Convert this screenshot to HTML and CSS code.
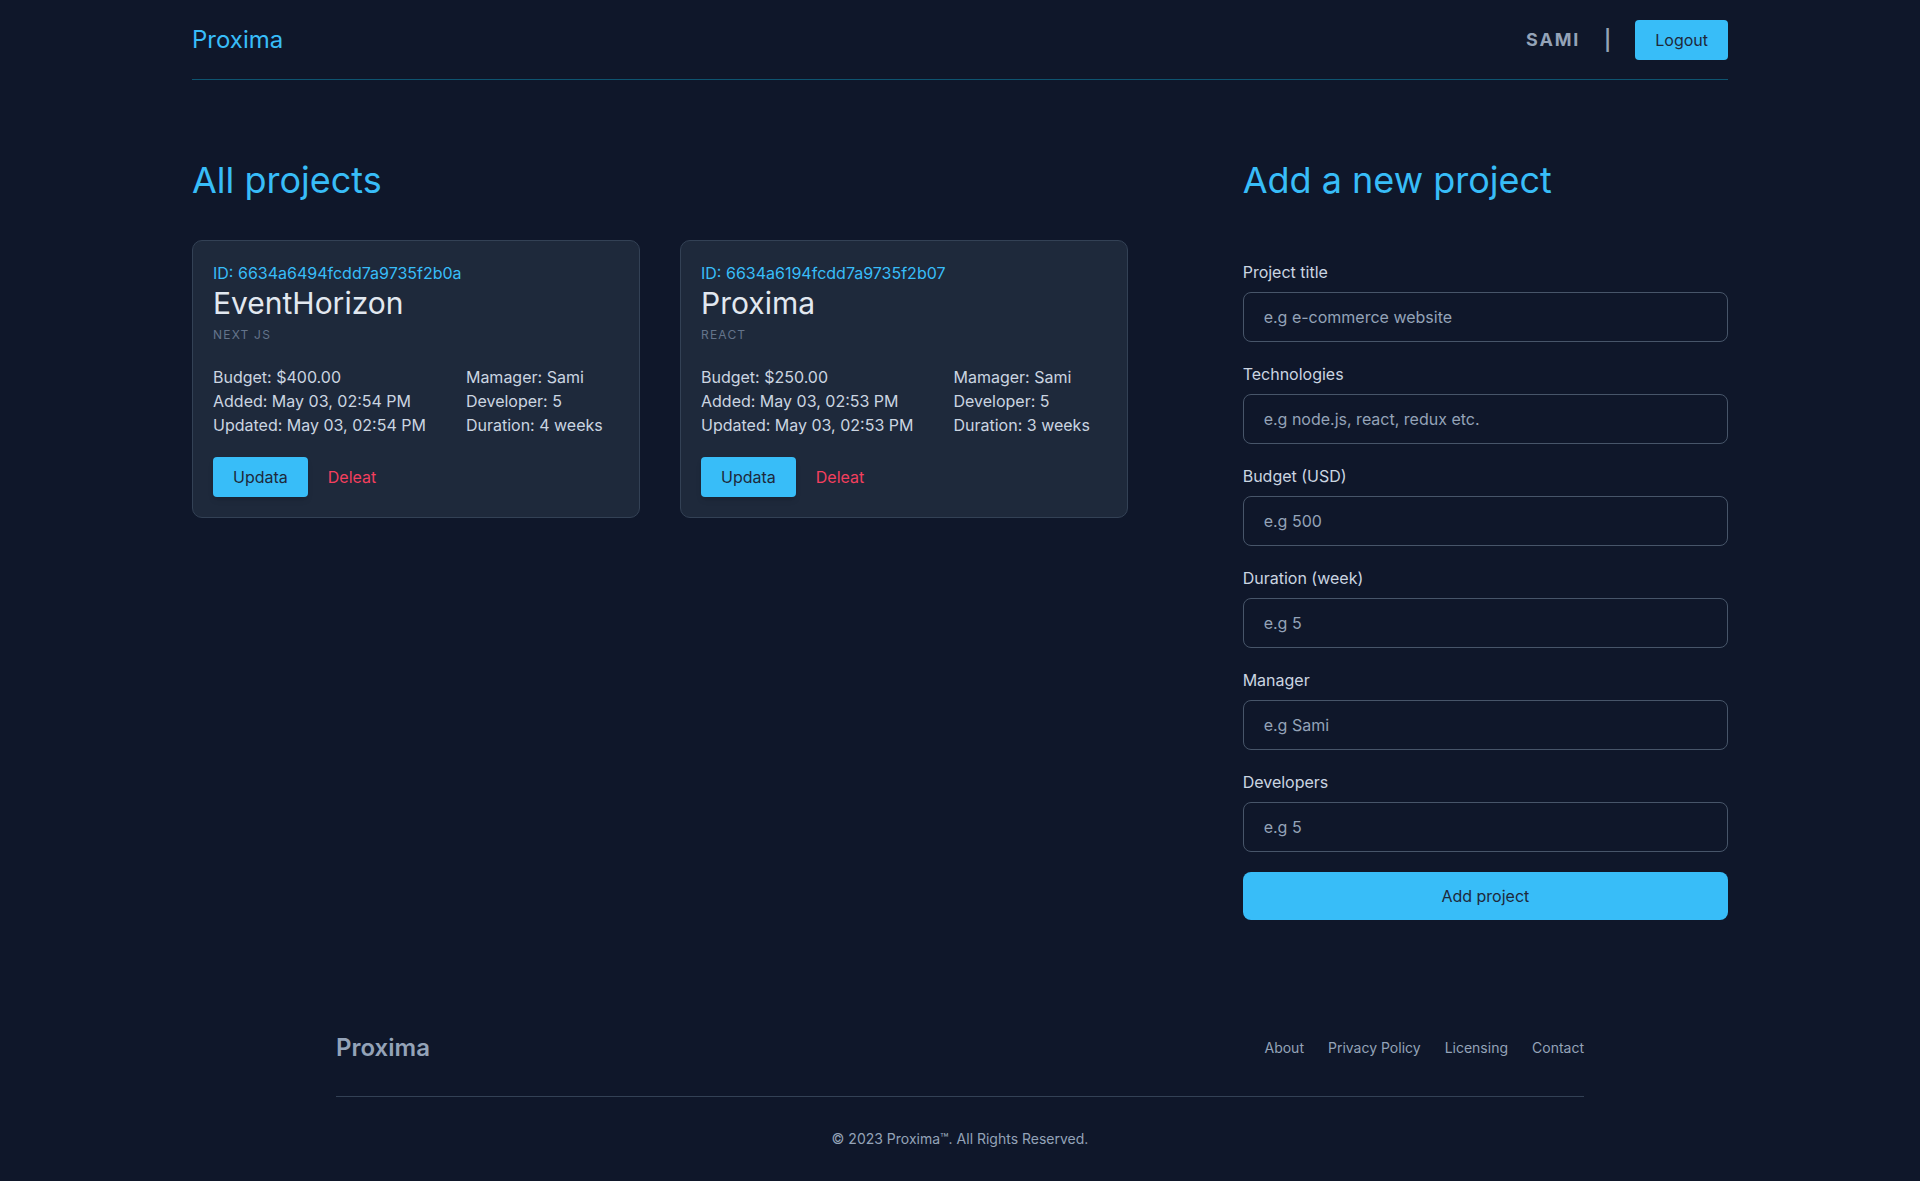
FILE: index.html
```html
<!DOCTYPE html>
<html lang="en">
<head>
<meta charset="utf-8">
<title>Proxima</title>
<link rel="stylesheet" href="styles.css">
</head>
<body>
<div class="container">
  <header class="header">
    <a class="logo" href="#">Proxima</a>
    <div class="user">
      <span class="user-name">SAMI</span>
      <span class="sep">|</span>
      <button class="btn btn-primary">Logout</button>
    </div>
  </header>

  <main class="main">
    <section class="projects">
      <h1 class="heading">All projects</h1>
      <div class="cards">
        <article class="card">
          <p class="card-id">ID: 6634a6494fcdd7a9735f2b0a</p>
          <h2 class="card-title">EventHorizon</h2>
          <p class="card-tech">NEXT JS</p>
          <div class="card-details">
            <div class="detail-col">
              <p>Budget: $400.00</p>
              <p>Added: May 03, 02:54 PM</p>
              <p>Updated: May 03, 02:54 PM</p>
            </div>
            <div class="detail-col">
              <p>Mamager: Sami</p>
              <p>Developer: 5</p>
              <p>Duration: 4 weeks</p>
            </div>
          </div>
          <div class="card-actions">
            <button class="btn btn-primary btn-shadow">Updata</button>
            <button class="btn btn-danger">Deleat</button>
          </div>
        </article>
        <article class="card">
          <p class="card-id">ID: 6634a6194fcdd7a9735f2b07</p>
          <h2 class="card-title">Proxima</h2>
          <p class="card-tech">REACT</p>
          <div class="card-details">
            <div class="detail-col">
              <p>Budget: $250.00</p>
              <p>Added: May 03, 02:53 PM</p>
              <p>Updated: May 03, 02:53 PM</p>
            </div>
            <div class="detail-col">
              <p>Mamager: Sami</p>
              <p>Developer: 5</p>
              <p>Duration: 3 weeks</p>
            </div>
          </div>
          <div class="card-actions">
            <button class="btn btn-primary btn-shadow">Updata</button>
            <button class="btn btn-danger">Deleat</button>
          </div>
        </article>
      </div>
    </section>

    <section class="add">
      <h1 class="heading">Add a new project</h1>
      <form class="form">
        <label class="field">
          <span class="label">Project title</span>
          <input class="input" type="text" placeholder="e.g e-commerce website">
        </label>
        <label class="field">
          <span class="label">Technologies</span>
          <input class="input" type="text" placeholder="e.g node.js, react, redux etc.">
        </label>
        <label class="field">
          <span class="label">Budget (USD)</span>
          <input class="input" type="text" placeholder="e.g 500">
        </label>
        <label class="field">
          <span class="label">Duration (week)</span>
          <input class="input" type="text" placeholder="e.g 5">
        </label>
        <label class="field">
          <span class="label">Manager</span>
          <input class="input" type="text" placeholder="e.g Sami">
        </label>
        <label class="field">
          <span class="label">Developers</span>
          <input class="input" type="text" placeholder="e.g 5">
        </label>
        <button type="button" class="btn-submit">Add project</button>
      </form>
    </section>
  </main>
</div>

<footer class="footer">
  <div class="footer-inner">
    <div class="footer-top">
      <span class="footer-logo">Proxima</span>
      <ul class="footer-links">
        <li><a href="#">About</a></li>
        <li><a href="#">Privacy Policy</a></li>
        <li><a href="#">Licensing</a></li>
        <li><a href="#">Contact</a></li>
      </ul>
    </div>
    <hr class="footer-hr">
    <span class="copyright">© 2023 Proxima™. All Rights Reserved.</span>
  </div>
</footer>
</body>
</html>
```

FILE: styles.css
```css
* {
  box-sizing: border-box;
}

html, body {
  margin: 0;
  padding: 0;
}

body {
  background: #0f172a;
  font-family: Inter, "Noto Sans", "Liberation Sans", sans-serif;
  font-size: 16px;
  line-height: 24px;
  color: #cbd5e1;
}

p, h1, h2 {
  margin: 0;
}

a {
  text-decoration: none;
  color: inherit;
}

.container {
  width: 1536px;
  margin: 0 auto;
}

.header {
  height: 80px;
  display: flex;
  align-items: center;
  justify-content: space-between;
  border-bottom: 1px solid #0e5470;
}

.logo {
  font-size: 24px;
  line-height: 32px;
  color: #38bdf8;
}

.user {
  display: flex;
  align-items: center;
}

.user-name {
  font-size: 18px;
  font-weight: 700;
  letter-spacing: 0.1em;
  color: #94a3b8;
}

.sep {
  margin: 0 24px;
  font-size: 20px;
  font-weight: 600;
  line-height: 28px;
  color: #94a3b8;
}

.btn {
  font-family: inherit;
  font-size: 16px;
  line-height: 24px;
  padding: 8px 20px;
  border: 0;
  border-radius: 4px;
  cursor: pointer;
}

.btn-primary {
  background: #38bdf8;
  color: #1e293b;
}

.btn-shadow {
  box-shadow: 0 4px 6px -1px rgba(0, 0, 0, 0.1), 0 2px 4px -2px rgba(0, 0, 0, 0.1);
}

.btn-danger {
  background: transparent;
  color: #f43f5e;
}

.main {
  display: grid;
  grid-template-columns: repeat(3, 1fr);
  column-gap: 40px;
  padding: 80px 0;
}

.projects {
  grid-column: span 2;
}

.heading {
  font-size: 36px;
  line-height: 40px;
  font-weight: 400;
  color: #38bdf8;
  margin-bottom: 40px;
}

.cards {
  display: grid;
  grid-template-columns: 448px 448px;
  gap: 40px;
  align-items: start;
}

.card {
  background: #1e293b;
  border: 1px solid #334155;
  border-radius: 10px;
  padding: 20px;
}

.card-id {
  color: #38bdf8;
}

.card-title {
  font-size: 30px;
  line-height: 36px;
  font-weight: 400;
  color: #e2e8f0;
}

.card-tech {
  margin-top: 6px;
  font-size: 12px;
  line-height: 16px;
  letter-spacing: 0.1em;
  color: #64748b;
}

.card-details {
  margin-top: 22px;
  display: flex;
  gap: 40px;
  color: #cbd5e1;
}

.card-actions {
  margin-top: 20px;
  display: flex;
}

.form {
  padding-top: 20px;
  display: flex;
  flex-direction: column;
  gap: 20px;
}

.field {
  display: flex;
  flex-direction: column;
  gap: 8px;
}

.label {
  color: #cbd5e1;
}

.input {
  height: 50px;
  padding: 12px 20px;
  font-family: inherit;
  font-size: 16px;
  line-height: 24px;
  background: transparent;
  border: 1px solid #475569;
  border-radius: 8px;
  color: #e2e8f0;
  outline: none;
}

.input::placeholder {
  color: #94a3b8;
}

.btn-submit {
  height: 48px;
  font-family: inherit;
  font-size: 16px;
  line-height: 24px;
  background: #38bdf8;
  color: #1e293b;
  border: 0;
  border-radius: 8px;
  cursor: pointer;
}

.footer-inner {
  max-width: 1280px;
  margin: 0 auto;
  padding: 32px 16px;
}

.footer-top {
  display: flex;
  align-items: center;
  justify-content: space-between;
  height: 32px;
}

.footer-logo {
  font-size: 24px;
  line-height: 32px;
  font-weight: 600;
  color: #94a3b8;
}

.footer-links {
  display: flex;
  gap: 24px;
  list-style: none;
  margin: 0;
  padding: 0;
  font-size: 14px;
  line-height: 20px;
  color: #94a3b8;
}

.footer-hr {
  margin: 32px 0;
  border: 0;
  border-top: 1px solid #334155;
  height: 0;
}

.copyright {
  display: block;
  text-align: center;
  font-size: 14px;
  line-height: 20px;
  color: #94a3b8;
}
```
